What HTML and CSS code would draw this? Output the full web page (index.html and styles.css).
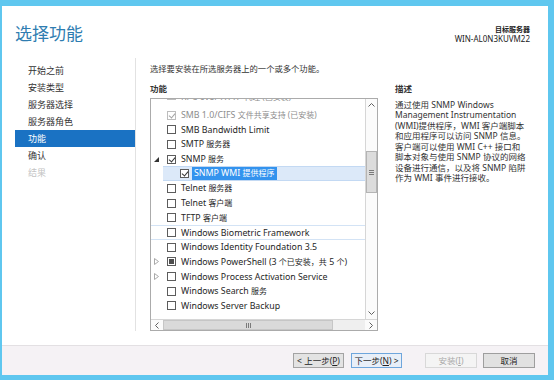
FILE: index.html
```html
<!DOCTYPE html>
<html lang="zh-CN">
<head>
  <meta charset="UTF-8">
  <meta name="viewport" content="width=device-width, initial-scale=1.0">
  <title>添加角色和功能向导</title>
  <link rel="stylesheet" href="styles.css">
</head>
<body>
  <div class="window">
    <div class="top">
      <h1>选择功能</h1>
      <div class="server">
        <div class="server-label">目标服务器</div>
        <div>WIN-AL0N3KUVM22</div>
      </div>
    </div>

    <div class="main">
      <ul class="steps">
        <li>开始之前</li>
        <li>安装类型</li>
        <li>服务器选择</li>
        <li>服务器角色</li>
        <li class="active">功能</li>
        <li>确认</li>
        <li class="off">结果</li>
      </ul>

      <div class="content">
        <p class="intro">选择要安装在所选服务器上的一个或多个功能。</p>

        <div class="columns">
          <div class="features">
            <h2>功能</h2>
            <div class="listbox">
              <div class="rows">
                <div class="row cut dis"><span class="exp"></span><span class="cb on"></span><span class="label">RPC over HTTP <span class="zh">代理 (已安装)</span></span></div>
                <div class="row dis"><span class="exp"></span><span class="cb on"></span><span class="label">SMB 1.0/CIFS <span class="zh">文件共享支持 (已安装)</span></span></div>
                <div class="row"><span class="exp"></span><span class="cb"></span><span class="label">SMB Bandwidth Limit</span></div>
                <div class="row"><span class="exp"></span><span class="cb"></span><span class="label">SMTP <span class="zh">服务器</span></span></div>
                <div class="row">
                  <span class="exp"><svg width="5" height="5" viewBox="0 0 5 5"><path d="M5 0 V5 H0 Z" fill="#333"/></svg></span>
                  <span class="cb on"></span><span class="label">SNMP <span class="zh">服务</span></span>
                </div>
                <div class="row child sel"><span class="exp"></span><span class="cb on"></span><span class="label">SNMP WMI <span class="zh">提供程序</span></span></div>
                <div class="row"><span class="exp"></span><span class="cb"></span><span class="label">Telnet <span class="zh">服务器</span></span></div>
                <div class="row"><span class="exp"></span><span class="cb"></span><span class="label">Telnet <span class="zh">客户端</span></span></div>
                <div class="row"><span class="exp"></span><span class="cb"></span><span class="label">TFTP <span class="zh">客户端</span></span></div>
                <div class="row hot"><span class="exp"></span><span class="cb"></span><span class="label">Windows Biometric Framework</span></div>
                <div class="row"><span class="exp"></span><span class="cb"></span><span class="label">Windows Identity Foundation 3.5</span></div>
                <div class="row">
                  <span class="exp"><svg width="5" height="7" viewBox="0 0 5 7"><path d="M0.5 0.5 L4.5 3.5 L0.5 6.5 Z" fill="none" stroke="#a9a9a9"/></svg></span>
                  <span class="cb part"></span><span class="label">Windows PowerShell (3 <span class="zh">个已安装，共</span> 5 <span class="zh">个</span>)</span>
                </div>
                <div class="row">
                  <span class="exp"><svg width="5" height="7" viewBox="0 0 5 7"><path d="M0.5 0.5 L4.5 3.5 L0.5 6.5 Z" fill="none" stroke="#a9a9a9"/></svg></span>
                  <span class="cb"></span><span class="label">Windows Process Activation Service</span>
                </div>
                <div class="row"><span class="exp"></span><span class="cb"></span><span class="label">Windows Search <span class="zh">服务</span></span></div>
                <div class="row"><span class="exp"></span><span class="cb"></span><span class="label">Windows Server Backup</span></div>
              </div>

              <div class="vscroll">
                <span class="arrow"><svg width="7" height="4" viewBox="0 0 7 4"><path d="M0.5 3.5 L3.5 0.5 L6.5 3.5" fill="none" stroke="#606060"/></svg></span>
                <div class="track">
                  <div class="thumb"><span class="grip"></span></div>
                </div>
                <span class="arrow"><svg width="7" height="4" viewBox="0 0 7 4"><path d="M0.5 0.5 L3.5 3.5 L6.5 0.5" fill="none" stroke="#606060"/></svg></span>
              </div>

              <div class="hscroll">
                <span class="arrow"><svg width="4" height="7" viewBox="0 0 4 7"><path d="M3.5 0.5 L0.5 3.5 L3.5 6.5" fill="none" stroke="#606060"/></svg></span>
                <div class="track">
                  <div class="thumb"><span class="grip"></span></div>
                </div>
                <span class="arrow"><svg width="4" height="7" viewBox="0 0 4 7"><path d="M0.5 0.5 L3.5 3.5 L0.5 6.5" fill="none" stroke="#606060"/></svg></span>
              </div>
            </div>
          </div>

          <div class="desc">
            <h2>描述</h2>
            <p>通过使用 SNMP Windows<br>Management Instrumentation<br>(WMI)提供程序，WMI 客户端脚本<br>和应用程序可以访问 SNMP 信息。<br>客户端可以使用 WMI C++ 接口和<br>脚本对象与使用 SNMP 协议的网络<br>设备进行通信，以及将 SNMP 陷阱<br>作为 WMI 事件进行接收。</p>
          </div>
        </div>
      </div>
    </div>

    <div class="footer">
      <button class="btn">&lt; 上一步(<u>P</u>)</button>
      <button class="btn default">下一步(<u>N</u>) &gt;</button>
      <button class="btn wide disabled">安装(<u>I</u>)</button>
      <button class="btn wide cancel">取消</button>
    </div>
  </div>
</body>
</html>
```

FILE: styles.css
```css
* {
  box-sizing: border-box;
}

html, body {
  margin: 0;
  padding: 0;
}

body {
  width: 554px;
  height: 380px;
  overflow: hidden;
  background: #5fc7ef;
  font-family: 'Noto Sans', 'Noto Sans CJK SC', sans-serif;
  color: #262626;
}

.window {
  margin: 6px 6px 5px 2px;
  height: 369px;
  background: #fff;
  display: flex;
  flex-direction: column;
}

/* header */

.top {
  height: 52px;
  display: flex;
  justify-content: space-between;
  align-items: flex-start;
  padding: 16px 18px 0 13px;
}

h1 {
  margin: 0;
  font-family: 'Noto Sans CJK SC', sans-serif;
  font-size: 17px;
  line-height: 22px;
  font-weight: 400;
  color: #2f7db1;
}

.server {
  margin-top: 2.5px;
  text-align: right;
  font-size: 8px;
  line-height: 9px;
  color: #222;
}

.server-label {
  font-family: 'Noto Sans CJK SC', sans-serif;
  font-size: 7px;
  font-weight: 700;
}

/* body */

.main {
  flex: 1;
  display: flex;
}

.steps {
  list-style: none;
  width: 134px;
  margin: 0 0 14px;
  padding: 3.5px 0 0;
  border-right: 1px solid #e2e2e2;
  font-family: 'Noto Sans CJK SC', sans-serif;
  font-size: 9px;
  color: #333;
}

.steps li {
  height: 17px;
  line-height: 17px;
  margin-left: 13px;
  padding-left: 13px;
}

.steps .active {
  background: #1a72c3;
  color: #fff;
}

.steps .off {
  color: #c4c4c4;
}

.content {
  flex: 1;
  padding: 4px 0 0 14px;
}

.intro {
  margin: 0;
  font-family: 'Noto Sans CJK SC', sans-serif;
  font-size: 8.3px;
  line-height: 12px;
  color: #333;
}

.columns {
  display: flex;
  margin-top: 8px;
}

.features {
  width: 228px;
}

h2 {
  margin: 0 0 4px;
  font-family: 'Noto Sans CJK SC', sans-serif;
  font-size: 8.5px;
  line-height: 12px;
  font-weight: 700;
  color: #333;
}

.desc {
  margin-left: 17px;
}

.desc h2 {
  margin-bottom: 5.75px;
}

.desc p {
  margin: 0;
  font-size: 8.5px;
  line-height: 10.5px;
  white-space: nowrap;
  color: #333;
}

/* feature list */

.listbox {
  height: 233px;
  border: 1px solid #ababab;
  display: grid;
  grid-template-columns: 1fr 12px;
  grid-template-rows: 1fr 11px;
}

.rows {
  overflow: hidden;
  font-size: 8.8px;
}

.row {
  display: flex;
  align-items: center;
  height: 14.7px;
  line-height: 12px;
}

.row.cut {
  height: 8.7px;
  align-items: flex-start;
  overflow: hidden;
}

.row.cut > * {
  margin-top: -8px;
}

.exp {
  width: 10px;
  display: flex;
  justify-content: center;
  align-items: center;
  flex: none;
}

.cb {
  position: relative;
  flex: none;
  width: 9px;
  height: 9px;
  margin-left: 6px;
  border: 1px solid #5c5c5c;
  background: #fff;
}

.cb.on::after {
  content: '';
  position: absolute;
  left: 2px;
  top: 0;
  width: 3px;
  height: 5px;
  border: solid #333;
  border-width: 0 1.2px 1.2px 0;
  transform: rotate(40deg);
}

.cb.part::after {
  content: '';
  position: absolute;
  top: 1px;
  left: 1px;
  right: 1px;
  bottom: 1px;
  background: #4d4d4d;
}

.label {
  margin-left: 5px;
  white-space: nowrap;
}

.zh {
  font-size: 8px;
}

.dis .cb {
  border-color: #bdbdbd;
}

.dis .cb.on::after {
  border-color: #a3a3a3;
}

.dis .label {
  color: #8d8d8d;
}

.row.child {
  margin-left: 12px;
  padding-left: 1px;
}

.row.sel {
  background: #dce9f9;
  border-top: 1px solid #c3d9f3;
  border-bottom: 1px solid #c3d9f3;
}

.row.sel .label {
  margin-left: 3px;
  padding: 0 2px;
  line-height: 12.7px;
  background: #3393ee;
  color: #fff;
}

.row.hot {
  border-top: 1px solid #d3e3f5;
  border-bottom: 1px solid #d3e3f5;
}

/* scrollbars */

.vscroll {
  display: flex;
  flex-direction: column;
  border-left: 1px solid #d6d6d6;
  background: #fbfbfb;
}

.hscroll {
  grid-column: 1 / 3;
  display: flex;
  border-top: 1px solid #d6d6d6;
  background: #fbfbfb;
}

.arrow {
  flex: none;
  width: 11px;
  height: 12px;
  display: flex;
  justify-content: center;
  align-items: center;
}

.hscroll .arrow {
  width: 12px;
  height: 10px;
}

.track {
  flex: 1;
  display: flex;
  flex-direction: column;
}

.vscroll .thumb {
  margin-top: 40px;
  height: 42px;
  border: 1px solid #b4b4b4;
  background: #dcdcdc;
  display: flex;
  justify-content: center;
  align-items: center;
}

.vscroll .grip {
  width: 5px;
  height: 5px;
  background: repeating-linear-gradient(#7a7a7a 0 1px, transparent 1px 2px);
}

.hscroll .track {
  flex-direction: row;
  background: #efefef;
}

.hscroll .thumb {
  width: 170px;
  border: 1px solid #c6c6c6;
  background: #dadada;
  display: flex;
  justify-content: center;
  align-items: center;
}

.hscroll .grip {
  width: 5px;
  height: 5px;
  background: repeating-linear-gradient(90deg, #7a7a7a 0 1px, transparent 1px 2px);
}

/* footer */

.footer {
  height: 30px;
  display: flex;
  justify-content: flex-end;
  align-items: center;
  padding-right: 13px;
  border-top: 1px solid #e3e0e3;
  background: #f5f2f5;
}

.btn {
  width: 51px;
  height: 15px;
  margin: 0 0 0 7px;
  padding: 0;
  border: 1px solid #a3a3a3;
  background: #e3e3e3;
  font-family: 'Noto Sans', 'Noto Sans CJK SC', sans-serif;
  font-size: 8.5px;
  line-height: 13px;
  color: #222;
}

.btn.wide {
  width: 52px;
}

.btn.default {
  border-color: #6ea6dc;
  background: #e8eff8;
}

.btn.disabled {
  margin-left: 23px;
  border-color: #d8d8d8;
  background: #f4f4f4;
  color: #a9a9a9;
}

.btn.cancel {
  margin-left: 6px;
  background: #e1e1e1;
  border-color: #9e9e9e;
}
```
